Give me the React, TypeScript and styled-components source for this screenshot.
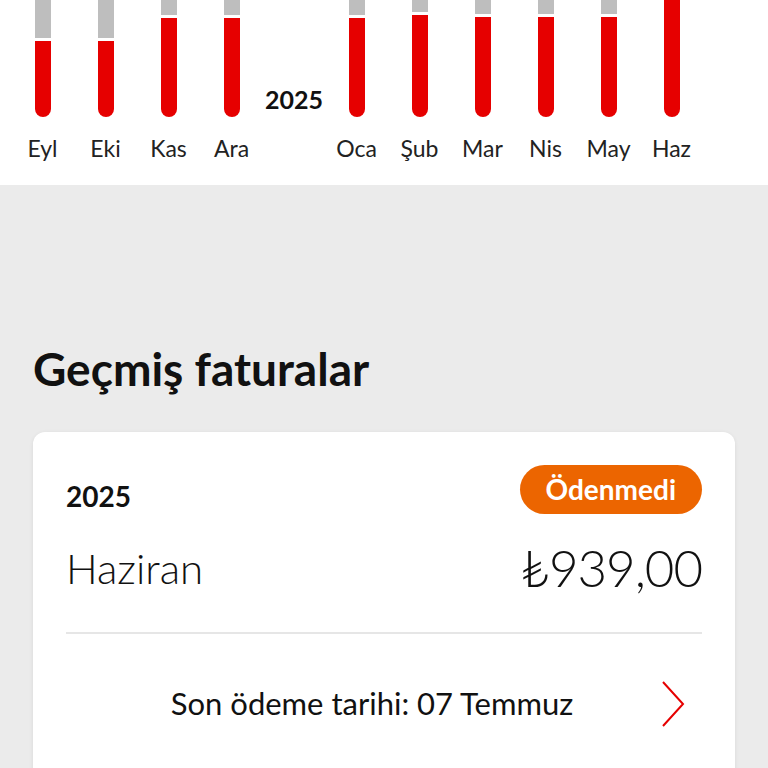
import styled, { createGlobalStyle } from "styled-components";

const GlobalStyle = createGlobalStyle`
  html, body {
    margin: 0;
    padding: 0;
    background: #ebebeb;
    font-family: Lato, "Open Sans", sans-serif;
    color: #111;
  }
`;

const Page = styled.div`
  width: 768px;
  height: 768px;
  overflow: hidden;
  display: flex;
  flex-direction: column;
`;

const ChartPanel = styled.div`
  flex: none;
  height: 185px;
  background: #fff;
  overflow: hidden;
`;

const ChartRow = styled.div`
  display: flex;
  align-items: flex-start;
  margin-left: -52px;
`;

const Column = styled.div`
  width: 63px;
  flex: none;
  display: flex;
  flex-direction: column;
  align-items: center;
`;

const Bar = styled.div`
  width: 16px;
  height: 117px;
  display: flex;
  flex-direction: column;
  gap: 3px;
`;

const BarGray = styled.div`
  background: #bebebe;
  flex: none;
`;

const BarRed = styled.div`
  background: #e60000;
  flex: 1;
  border-radius: 0 0 8px 8px;
`;

const MonthLabel = styled.div`
  margin-top: 17px;
  font-size: 23px;
  line-height: 28px;
  color: #222;
  white-space: nowrap;
`;

const YearMark = styled.div`
  width: 62px;
  flex: none;
  padding-top: 84px;
  text-align: center;
  font-size: 25px;
  font-weight: 700;
  line-height: 30px;
`;

const Section = styled.div`
  padding: 157px 33px 0;
`;

const Heading = styled.h2`
  margin: 0 0 36px;
  font-size: 46px;
  line-height: 54px;
  font-weight: 700;
  color: #111;
`;

const Card = styled.div`
  background: #fff;
  border-radius: 12px;
  box-shadow: 0 1px 4px rgba(0, 0, 0, 0.08);
  padding: 33px 33px 0;
  height: 400px;
`;

const TopRow = styled.div`
  display: flex;
  justify-content: space-between;
  align-items: center;
`;

const Year = styled.div`
  font-size: 28px;
  font-weight: 700;
  margin-top: 12px;
`;

const Badge = styled.div`
  background: #ec6500;
  color: #fff;
  font-size: 28px;
  font-weight: 700;
  height: 49px;
  line-height: 49px;
  padding: 0 26px;
  border-radius: 25px;
`;

const AmountRow = styled.div`
  display: flex;
  justify-content: space-between;
  align-items: center;
  margin-top: 26px;
  padding-bottom: 36px;
  border-bottom: 2px solid #e6e6e6;
`;

const MonthName = styled.div`
  font-size: 42px;
  font-weight: 300;
  line-height: 50px;
`;

const Amount = styled.div`
  font-size: 51px;
  font-weight: 300;
  line-height: 56px;
  letter-spacing: -1px;
`;

const DueRow = styled.div`
  display: flex;
  align-items: center;
  justify-content: center;
  position: relative;
  height: 138px;
`;

const DueText = styled.div`
  font-size: 31px;
  line-height: 36px;
  margin-right: 24px;
`;

const Chevron = styled.svg`
  position: absolute;
  right: 16px;
  top: 46px;
`;

type Month = { label: string; gray: number | null };

const before: Month[] = [
  { label: "Ağu", gray: 38 },
  { label: "Eyl", gray: 38 },
  { label: "Eki", gray: 38 },
  { label: "Kas", gray: 15 },
  { label: "Ara", gray: 15 },
];

const after: Month[] = [
  { label: "Oca", gray: 15 },
  { label: "Şub", gray: 12 },
  { label: "Mar", gray: 14 },
  { label: "Nis", gray: 14 },
  { label: "May", gray: 14 },
  { label: "Haz", gray: null },
];

function MonthColumn({ m }: { m: Month }) {
  return (
    <Column>
      <Bar>
        {m.gray !== null && <BarGray style={{ height: m.gray }} />}
        <BarRed />
      </Bar>
      <MonthLabel>{m.label}</MonthLabel>
    </Column>
  );
}

export default function App() {
  return (
    <Page>
      <GlobalStyle />
      <ChartPanel>
        <ChartRow>
          {before.map((m) => (
            <MonthColumn key={m.label} m={m} />
          ))}
          <YearMark>2025</YearMark>
          {after.map((m) => (
            <MonthColumn key={m.label} m={m} />
          ))}
        </ChartRow>
      </ChartPanel>
      <Section>
        <Heading>Geçmiş faturalar</Heading>
        <Card>
          <TopRow>
            <Year>2025</Year>
            <Badge>Ödenmedi</Badge>
          </TopRow>
          <AmountRow>
            <MonthName>Haziran</MonthName>
            <Amount>₺939,00</Amount>
          </AmountRow>
          <DueRow>
            <DueText>Son ödeme tarihi: 07 Temmuz</DueText>
            <Chevron width="26" height="48" viewBox="0 0 26 48">
              <polyline
                points="3,2 23,24 3,46"
                fill="none"
                stroke="#e60000"
                strokeWidth="2"
              />
            </Chevron>
          </DueRow>
        </Card>
      </Section>
    </Page>
  );
}
